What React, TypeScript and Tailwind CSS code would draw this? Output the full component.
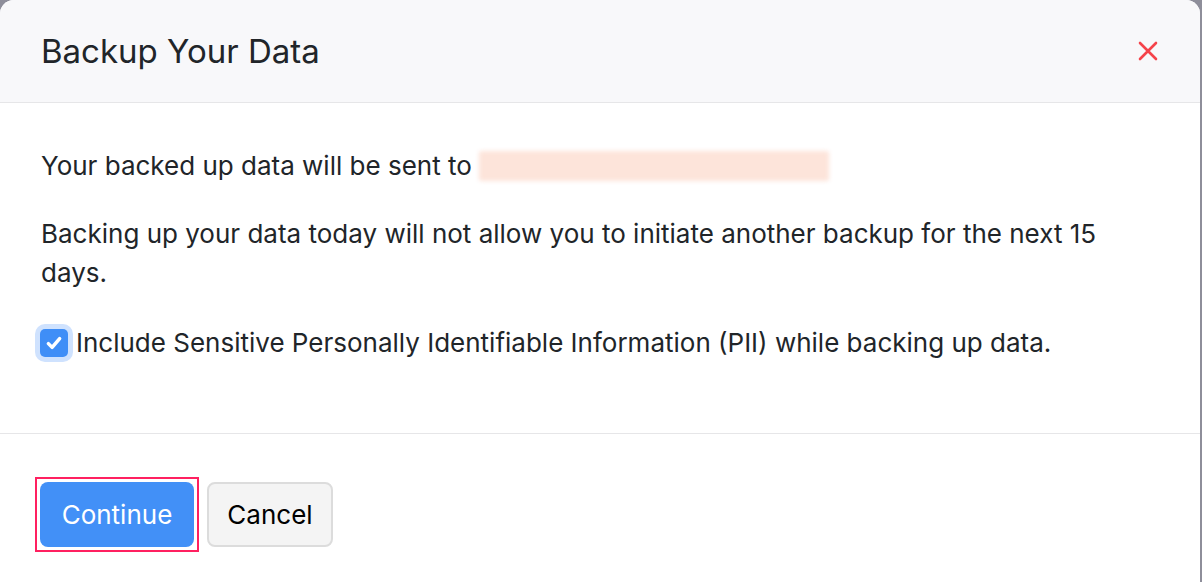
import React from "react";

export default function App() {
  return (
    <div className="w-[1202px] h-[582px] bg-[#8e8e9a] overflow-hidden" style={{ fontFamily: "Inter, 'Noto Sans', sans-serif" }}>
      <div className="w-[1200px] h-[582px] bg-white rounded-tr-[14px] rounded-tl-[14px] overflow-hidden flex flex-col">
        <div className="h-[103px] shrink-0 bg-[#f8f8fa] border-b border-[#e6e6e8] flex items-center justify-between pl-[41px] pr-[40px]">
          <h1 className="text-[33px] text-[#212529] font-normal leading-none">Backup Your Data</h1>
          <button className="w-[24px] h-[24px] flex items-center justify-center text-[#f5434a]">
            <svg width="22" height="22" viewBox="0 0 22 22" fill="none" stroke="currentColor" strokeWidth="2.6" strokeLinecap="round">
              <path d="M3 3 L19 19 M19 3 L3 19" />
            </svg>
          </button>
        </div>
        <div className="h-[331px] shrink-0 border-b border-[#e6e6e8] pl-[41px] pr-[40px] pt-[43px] text-[26px] leading-[39px] text-[#212529]">
          <p className="flex items-center">
            <span>Your backed up data will be sent to</span>
            <span className="ml-[7px] inline-block w-[350px] h-[30px] bg-[#fde4da] blur-[2px] rounded-[2px]" />
          </p>
          <p className="mt-[29px]">Backing up your data today will not allow you to initiate another backup for the next 15 days.</p>
          <label className="mt-[31px] flex items-center -ml-[1px]">
            <span className="w-[28px] h-[28px] rounded-[5px] bg-[#3f8ef7] flex items-center justify-center shadow-[0_0_0_5px_#cfe2fe] shrink-0">
              <svg width="20" height="20" viewBox="0 0 16 16" fill="none" stroke="white" strokeWidth="2.8" strokeLinecap="round" strokeLinejoin="round">
                <path d="M3.5 8.5 L6.5 11.5 L12.5 4.5" />
              </svg>
            </span>
            <span className="ml-[8px]">Include Sensitive Personally Identifiable Information (PII) while backing up data.</span>
          </label>
        </div>
        <div className="flex items-start gap-[13px] pl-[40px] pt-[48px]">
          <div className="outline-2 outline-[#ff2060] outline-offset-[3px]">
            <button className="w-[154px] h-[65px] rounded-[8px] bg-[#4290f7] text-white text-[26px]">Continue</button>
          </div>
          <button className="w-[126px] h-[65px] rounded-[8px] bg-[#f4f4f4] border-2 border-[#dcdcdc] text-black text-[26px]">Cancel</button>
        </div>
      </div>
    </div>
  );
}
